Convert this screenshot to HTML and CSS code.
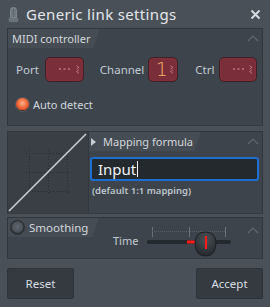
FILE: index.html
```html
<!DOCTYPE html>
<html>
<head>
<meta charset="utf-8">
<link rel="stylesheet" href="styles.css">
</head>
<body>
<div class="window">
  <div class="titlebar">
    <svg class="title-icon" width="11" height="17" viewBox="0 0 11 17">
      <path d="M2 5 Q2 1 5.5 1 Q9 1 9 5 L9 12 L2 12 Z" fill="#7d858c"/>
      <path d="M4 3 V11 M5.5 2 V11 M7 3 V11" stroke="#5b6269" stroke-width="0.8"/>
      <path d="M0.5 12 H10.5 L10 16 H1 Z" fill="#6a7279"/>
    </svg>
    <span class="title">Generic link settings</span>
    <svg class="close" width="11" height="11" viewBox="0 0 11 11">
      <path d="M1.5 1.5 L9.5 9.5 M9.5 1.5 L1.5 9.5" stroke="#d6dce0" stroke-width="2"/>
    </svg>
  </div>

  <div class="content">
    <section class="panel p1">
      <div class="panel-head">
        <div class="tab tab1">MIDI controller</div>
        <svg class="chev" width="12" height="7" viewBox="0 0 12 7"><path d="M1 6 L6 1 L11 6" fill="none" stroke="#5f666d" stroke-width="1.2"/></svg>
      </div>
      <div class="midi-row">
        <span class="lbl">Port</span>
        <div class="spin w-port"><svg class="dash" width="11" height="2" viewBox="0 0 11 2"><path d="M0 1 H2 M4.5 1 H6.5 M9 1 H11" stroke="#e89aa4" stroke-width="1"/></svg><svg class="arr" width="4" height="9" viewBox="0 0 4 9"><path d="M0.5 0.5 L3 2.5 L0.5 4 M3 5 L0.5 6.5 L3 8.5" fill="none" stroke="#c47a86" stroke-width="0.9"/></svg></div>
        <span class="lbl ch">Channel</span>
        <div class="spin w-ch"><span class="num">1</span><svg class="arr" width="4" height="9" viewBox="0 0 4 9"><path d="M0.5 0.5 L3 2.5 L0.5 4 M3 5 L0.5 6.5 L3 8.5" fill="none" stroke="#c47a86" stroke-width="0.9"/></svg></div>
        <span class="lbl ctrl">Ctrl</span>
        <div class="spin w-ctrl"><svg class="dash" width="11" height="2" viewBox="0 0 11 2"><path d="M0 1 H2 M4.5 1 H6.5 M9 1 H11" stroke="#e89aa4" stroke-width="1"/></svg><svg class="arr" width="4" height="9" viewBox="0 0 4 9"><path d="M0.5 0.5 L3 2.5 L0.5 4 M3 5 L0.5 6.5 L3 8.5" fill="none" stroke="#c47a86" stroke-width="0.9"/></svg></div>
      </div>
      <div class="auto">
        <span class="radio on"></span>
        <span class="auto-lbl">Auto detect</span>
      </div>
    </section>

    <section class="panel p2">
      <div class="graph">
        <svg width="80" height="80" viewBox="0 0 80 80">
          <g stroke="#262b30" stroke-width="1" stroke-dasharray="1 2">
            <path d="M21.5 18 V62 M40.5 18 V62 M59.5 18 V62"/>
            <path d="M18 21.5 H63 M18 40.5 H63 M18 59.5 H63"/>
          </g>
          <path d="M1 79 L78 2" stroke="#c9cfd4" stroke-width="1.6"/>
        </svg>
      </div>
      <div class="formula">
        <div class="panel-head">
          <div class="tab tab2"><svg class="tri" width="5" height="8" viewBox="0 0 5 8"><path d="M0 0 L5 4 L0 8 Z" fill="#c6ccd2"/></svg>Mapping formula</div>
          <svg class="chev" width="12" height="7" viewBox="0 0 12 7"><path d="M1 6 L6 1 L11 6" fill="none" stroke="#5f666d" stroke-width="1.2"/></svg>
        </div>
        <div class="input">Input<span class="caret"></span></div>
        <div class="hint">(default 1:1 mapping)</div>
      </div>
    </section>

    <section class="panel p3">
      <div class="panel-head">
        <div class="tab tab3"><span class="radio off"></span>Smoothing</div>
        <span class="time">Time</span>
        <div class="slider">
          <svg width="90" height="32" viewBox="0 0 90 32">
            <path d="M5.5 2 V12 M42.5 2 V12 M78.5 2 V12" stroke="#6a7178" stroke-width="1"/>
            <path d="M5 6.5 H79" stroke="#555c63" stroke-width="1" stroke-dasharray="1 1"/>
            <rect x="0" y="15" width="84" height="4" rx="2" fill="#24292d"/>
            <rect x="40" y="15.5" width="9" height="3" fill="#ff1a1a"/>
            <defs>
              <radialGradient id="kg" cx="0.5" cy="0.3" r="0.7">
                <stop offset="0" stop-color="#4b5258"/>
                <stop offset="1" stop-color="#25292d"/>
              </radialGradient>
            </defs>
            <path d="M48 18 Q48 7 58.5 7 Q69 7 69 18 Q69 31 58.5 31 Q48 31 48 18 Z" fill="url(#kg)" stroke="#1e2226" stroke-width="1"/>
            <rect x="58" y="11" width="2" height="13" fill="#ff1a1a"/>
          </svg>
        </div>
        <svg class="chev" width="12" height="7" viewBox="0 0 12 7"><path d="M1 6 L6 1 L11 6" fill="none" stroke="#5f666d" stroke-width="1.2"/></svg>
      </div>
    </section>

    <div class="buttons">
      <button class="btn">Reset</button>
      <button class="btn">Accept</button>
    </div>
  </div>
</div>
</body>
</html>
```

FILE: styles.css
```css
* { box-sizing: border-box; }
html, body { margin: 0; padding: 0; }
body {
  width: 270px;
  height: 307px;
  background: #4a5057;
  font-family: "Noto Sans", "Open Sans", sans-serif;
  color: #c8d0d8;
  overflow: hidden;
}
.window { width: 270px; height: 307px; }

.titlebar {
  height: 28px;
  display: flex;
  align-items: center;
  padding: 0 8px 0 8px;
}
.title-icon { margin-right: 7px; margin-top: 1px; }
.title {
  font-size: 15px;
  color: #e2e7eb;
  flex: 1;
  letter-spacing: 0.35px;
  margin-top: -1px;
}
.close { margin-right: 1px; }

.content { padding: 0 7px; }

.panel {
  background: #3e444b;
  border: 1px solid #32373d;
  border-bottom-color: #363b41;
  position: relative;
}
.p1 { height: 98px; }
.p2 { height: 83px; margin-top: 5px; display: flex; }
.p3 { height: 42px; margin-top: 3px; }

.panel-head {
  height: 19px;
  display: flex;
  align-items: center;
}
.tab {
  flex: none;
  height: 19px;
  background: #464c53;
  font-size: 11.5px;
  color: #d2d8de;
  white-space: nowrap;
  padding: 0 0 0 5px;
  display: flex;
  align-items: center;
  clip-path: polygon(0 0, 100% 0, calc(100% - 7px) 100%, 0 100%);
}
.tab1 { width: 92px; padding-left: 4px; font-size: 11px; }
.chev { margin-left: auto; margin-right: 3px; flex: none; }

.midi-row {
  display: flex;
  align-items: center;
  height: 25px;
  margin-top: 9px;
  padding-left: 8px;
}
.lbl { font-size: 11.5px; color: #c2ccd6; white-space: nowrap; }
.spin {
  flex: none;
  height: 25px;
  background: #7a2e39;
  border: 1px solid #3a2226;
  border-radius: 5px;
  display: flex;
  align-items: center;
  justify-content: center;
  position: relative;
  box-shadow: inset 0 0 0 1px #852f3c;
}
.spin .arr { position: absolute; right: 3px; top: 7px; }
.dash { display: block; margin-top: -1px; }
.w-port { width: 39px; margin-left: 6px; }
.ch { margin-left: 16px; }
.w-ch { width: 30px; margin-left: 4px; }
.ctrl { margin-left: 17px; }
.w-ctrl { width: 38px; margin-left: 5px; }
.num { color: #f3b26a; font-size: 19px; font-family: "DejaVu Sans", sans-serif; font-weight: 200; margin-left: -3px; margin-top: -2px; }

.auto {
  display: flex;
  align-items: center;
  margin-top: 15px;
  padding-left: 7px;
}
.radio {
  width: 15px;
  height: 15px;
  border-radius: 50%;
  display: inline-block;
  flex: none;
}
.radio.on {
  background: radial-gradient(circle at 50% 40%, #ffb08a 0, #f06a3c 45%, #c84a22 70%, #3b2f2c 71%, #2e3337 100%);
  border: 1px solid #555b61;
}
.auto-lbl { font-size: 11px; color: #cfd7de; margin-left: 3px; }

.graph {
  width: 80px;
  height: 81px;
  background: #393f45;
  flex: none;
}
.graph svg { display: block; }
.formula { flex: 1; display: flex; flex-direction: column; border-left: 1px solid #33383e; min-width: 0; }
.tab2 { width: 112px; padding-left: 2px; font-size: 11px; }
.tri { margin-right: 7px; }
.input {
  margin: 6px 3px 0 1px;
  height: 24px;
  border: 2px solid #1c6fd0;
  border-radius: 3px;
  background: #24292e;
  font-size: 15px;
  color: #f2f4f6;
  padding-left: 6px;
  display: flex;
  align-items: center;
}
.caret { width: 1px; height: 16px; background: #f2f4f6; margin-left: 1px; }
.hint { font-size: 9.5px; color: #bcc4cc; margin: 3px 0 0 3px; font-weight: 600; white-space: nowrap; }

.p3 .panel-head { align-items: flex-start; height: 40px; }
.tab3 { width: 91px; padding-left: 2px; font-size: 11.5px; }
.radio.off {
  width: 15px; height: 15px;
  background: radial-gradient(circle at 50% 45%, #60676e 0, #4a5056 55%, #2b3034 65%, #565d63 100%);
  border: 1px solid #2a2e32;
  margin-right: 4px;
}
.time { font-size: 11px; color: #c2ccd6; margin: 15px 0 0 14px; }
.slider { margin: 7px 0 0 9px; }
.slider svg { display: block; }
.p3 .chev { margin-top: 9px; }

.buttons {
  display: flex;
  justify-content: space-between;
  margin-top: 9px;
}
.btn {
  width: 67px;
  height: 31px;
  background: #343a40;
  border: 1px dotted #2a2e33;
  border-radius: 2px;
  color: #d8dee3;
  font-family: "Noto Sans", "Open Sans", sans-serif;
  font-size: 11.5px;
  padding: 0;
}
```
